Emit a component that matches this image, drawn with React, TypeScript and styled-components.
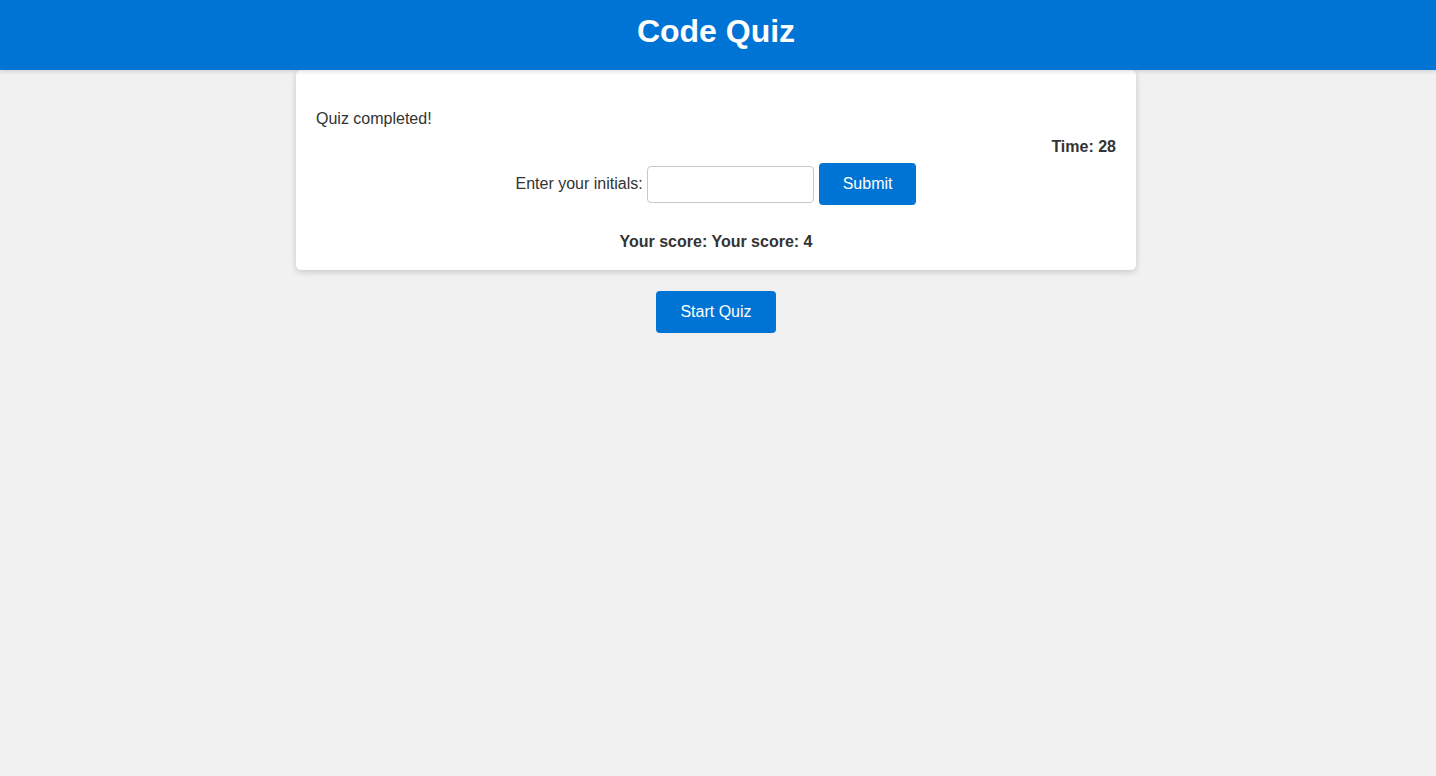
import React from "react";
import styled, { createGlobalStyle } from "styled-components";

const Global = createGlobalStyle`
  html, body { margin: 0; padding: 0; }
  body {
    background: #f1f1f1;
    font-family: "Liberation Sans", Arial, sans-serif;
    color: #333;
    font-size: 16px;
  }
`;

const Header = styled.header`
  background: #0074d4;
  height: 70px;
  box-sizing: border-box;
  padding: 11px 4px 0 0;
  box-shadow: 0 2px 4px rgba(0, 0, 0, 0.12);
  position: relative;
  z-index: 1;
`;

const Title = styled.h1`
  margin: 0;
  text-align: center;
  color: #fff;
  font-size: 32px;
  line-height: 40px;
  font-weight: 700;
`;

const Main = styled.main`
  display: flex;
  flex-direction: column;
  align-items: center;
  padding-right: 4px;
`;

const Card = styled.section`
  width: 840px;
  box-sizing: border-box;
  background: #fff;
  border-radius: 5px;
  box-shadow: 0 2px 6px rgba(0, 0, 0, 0.18);
  padding: 20px 20px 19px;
  display: flex;
  flex-direction: column;
`;

const Message = styled.p`
  margin: 20px 0 0;
  line-height: 18px;
`;

const Timer = styled.div`
  margin-top: 10px;
  text-align: right;
  font-weight: 700;
  line-height: 18px;
`;

const Row = styled.div`
  margin-top: 7px;
  display: flex;
  justify-content: center;
  align-items: center;
  height: 42px;
`;

const Label = styled.label`
  line-height: 18px;
  margin-right: 4px;
`;

const Input = styled.input`
  width: 167px;
  height: 37px;
  box-sizing: border-box;
  border: 1px solid #c8c8c8;
  border-radius: 4px;
  font-family: inherit;
  font-size: 16px;
  padding: 0 8px;
  margin: 0 5px 0 0;
`;

const Button = styled.button`
  height: 42px;
  padding: 0 24px;
  border: none;
  border-radius: 4px;
  background: #0074d4;
  color: #fff;
  font-family: "Liberation Sans", Arial, sans-serif;
  font-size: 16px;
  cursor: pointer;
`;

const Score = styled.div`
  margin-top: 28px;
  text-align: center;
  font-weight: 700;
  line-height: 18px;
`;

const StartButton = styled(Button)`
  margin-top: 21px;
`;

export default function App() {
  return (
    <>
      <Global />
      <Header>
        <Title>Code Quiz</Title>
      </Header>
      <Main>
        <Card>
          <Message>Quiz completed!</Message>
          <Timer>Time: 28</Timer>
          <Row>
            <Label htmlFor="initials">Enter your initials:</Label>
            <Input id="initials" type="text" />
            <Button>Submit</Button>
          </Row>
          <Score>Your score: Your score: 4</Score>
        </Card>
        <StartButton>Start Quiz</StartButton>
      </Main>
    </>
  );
}
